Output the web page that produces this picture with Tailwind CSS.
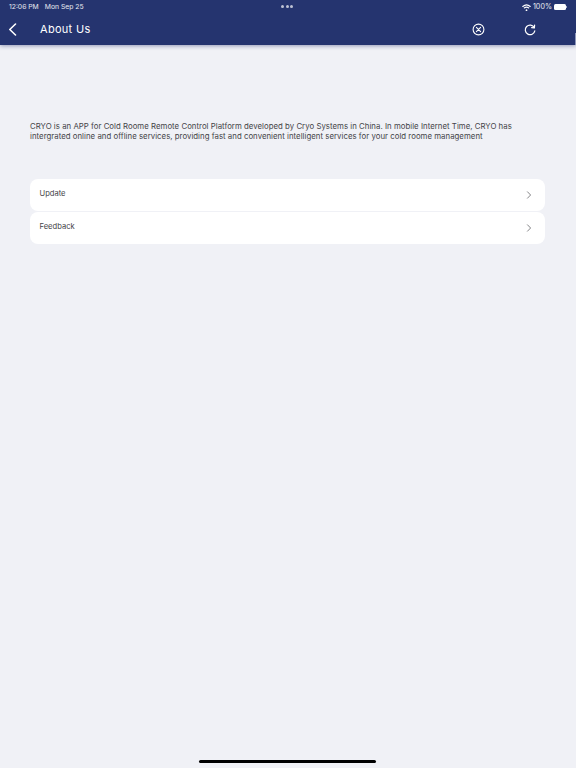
<!DOCTYPE html>
<html lang="en">
<head>
    <meta charset="UTF-8">
    <meta name="viewport" content="width=device-width, initial-scale=1.0">
    <title>About Us</title>
    <script src="https://cdn.jsdelivr.net/npm/@tailwindcss/browser@4"></script>
</head>
<body class="bg-[#f0f1f6] text-[#444448] font-['Inter','Noto_Sans',sans-serif]">
    <div class="flex flex-col h-[768px] w-[576px] overflow-hidden">
        <!-- header -->
        <header class="relative h-[45px] shrink-0 bg-[#25346f] text-white shadow-[0_1px_4px_rgba(37,52,111,0.45)]">
            <div class="relative flex items-center justify-between h-[14px] pt-[1px] pl-[9px] pr-[9px] text-[6.8px] text-white/90">
                <div class="flex gap-[6px]">
                    <span>12:06 PM</span>
                    <span>Mon Sep 25</span>
                </div>
                <div class="absolute left-[281px] top-[5px] flex gap-[1.5px]">
                    <span class="w-[3px] h-[3px] rounded-full bg-white/70"></span>
                    <span class="w-[3px] h-[3px] rounded-full bg-white/70"></span>
                    <span class="w-[3px] h-[3px] rounded-full bg-white/70"></span>
                </div>
                <div class="flex items-center gap-[2px]">
                    <svg class="w-[9px] h-[7px]" viewBox="0 0 18 14" fill="none" stroke="white" stroke-width="2.2" stroke-linecap="round">
                        <path d="M1.5 5 C6 1 12 1 16.5 5"/>
                        <path d="M4.5 8 C7 6 11 6 13.5 8"/>
                        <path d="M9 12.5 L9 12.4" stroke-width="3.5"/>
                    </svg>
                    <span class="text-[7.2px]">100%</span>
                    <span class="flex items-center">
                        <span class="w-[12px] h-[6px] rounded-[1.5px] bg-white"></span>
                        <span class="w-[1px] h-[2px] bg-white/60"></span>
                    </span>
                </div>
            </div>
            <div class="flex items-center h-[31px]">
                <button class="w-[40px] pl-[8px] flex items-center">
                    <svg class="w-[9px] h-[13px]" viewBox="0 0 9 13" fill="none" stroke="white" stroke-width="1.6" stroke-linecap="round" stroke-linejoin="round">
                        <path d="M7.5 1 L1.8 6.5 L7.5 12"/>
                    </svg>
                </button>
                <h1 class="text-[11px] tracking-[0.3px] leading-none">About Us</h1>
                <div class="ml-auto flex items-center">
                    <svg class="w-[13px] h-[13px] mr-[39px]" viewBox="0 0 13 13" fill="none" stroke="white" stroke-width="1.1" stroke-linecap="round">
                        <circle cx="6.5" cy="6.5" r="5.4"/>
                        <path d="M4.4 4.4 L8.6 8.6 M8.6 4.4 L4.4 8.6"/>
                    </svg>
                    <svg class="w-[12px] h-[12px] mr-[40px]" viewBox="0 0 12 12" fill="none" stroke="white" stroke-width="1.2" stroke-linecap="round" stroke-linejoin="round">
                        <path d="M10.3 3.6 A4.8 4.8 0 1 0 10.8 6.8"/>
                        <path d="M10.6 1 L10.4 3.8 L7.6 3.6"/>
                    </svg>
                </div>
            </div>
            <span class="absolute right-0 top-[33px] w-[1px] h-[12px] bg-[#8f98bb]"></span>
        </header>

        <main class="flex-1 px-[30px]">
            <p class="mt-[76px] text-[7.8px] leading-[10px] tracking-[0.03px]">CRYO is an APP for Cold Roome Remote Control Platform developed by Cryo Systems in China. In mobile Internet Time, CRYO has intergrated online and offline services, providing fast and convenient intelligent services for your cold roome management</p>

            <div class="mt-[38px] flex flex-col gap-[1px] w-[515px]">
                <div class="h-[32px] bg-white rounded-[8px] flex justify-between pl-[9.5px] pr-[13px]">
                    <span class="text-[7.6px] leading-none mt-[11px]">Update</span>
                    <svg class="w-[6px] h-[8px] mt-[12px]" viewBox="0 0 6 8" fill="none" stroke="#77777b" stroke-width="0.9" stroke-linecap="round" stroke-linejoin="round">
                        <path d="M1.5 0.8 L4.6 4 L1.5 7.2"/>
                    </svg>
                </div>
                <div class="h-[32px] bg-white rounded-[8px] flex justify-between pl-[9.5px] pr-[13px]">
                    <span class="text-[7.6px] leading-none mt-[11px]">Feedback</span>
                    <svg class="w-[6px] h-[8px] mt-[12px]" viewBox="0 0 6 8" fill="none" stroke="#77777b" stroke-width="0.9" stroke-linecap="round" stroke-linejoin="round">
                        <path d="M1.5 0.8 L4.6 4 L1.5 7.2"/>
                    </svg>
                </div>
            </div>
        </main>

        <div class="h-[8px] shrink-0 flex justify-center pr-[2px]">
            <span class="w-[177px] h-[3px] rounded-full bg-black"></span>
        </div>
    </div>
</body>
</html>
